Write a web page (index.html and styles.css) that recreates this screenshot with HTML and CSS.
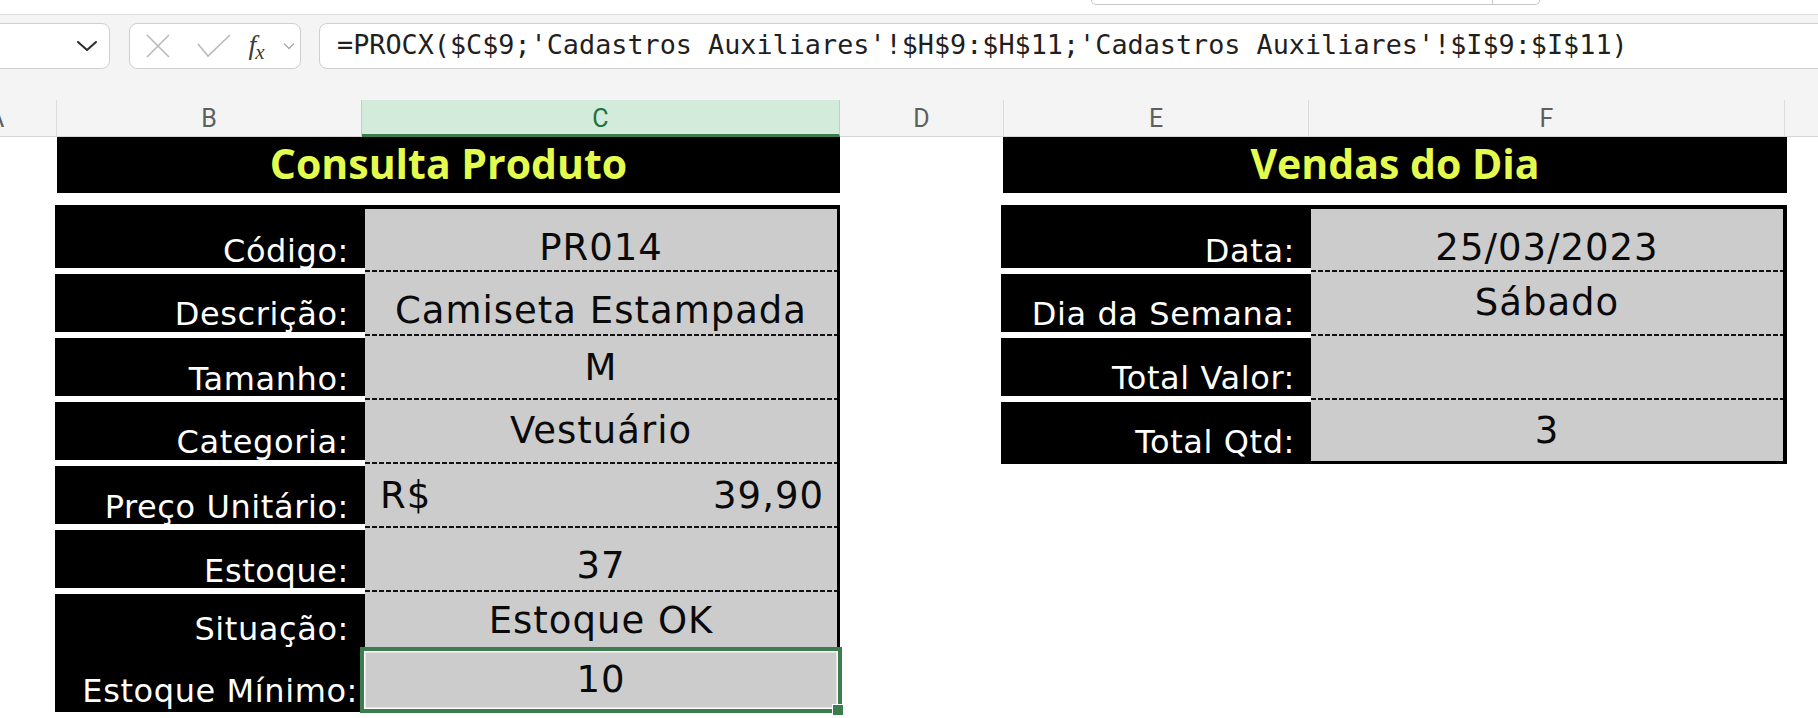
FILE: index.html
```html
<!DOCTYPE html>
<html lang="pt-BR">
<head>
<meta charset="utf-8">
<title>Consulta Produto</title>
<link rel="stylesheet" href="styles.css">
</head>
<body>
<div class="topstrip"><div class="searchbox"><span class="sb-div"></span></div></div>
<div class="toolbar">
  <div class="namebox">
    <svg class="chev" width="20" height="10" viewBox="0 0 20 10"><polyline points="1,1 10,9 19,1" fill="none" stroke="#2b2b2b" stroke-width="2" stroke-linecap="round" stroke-linejoin="round"/></svg>
  </div>
  <div class="fxbox">
    <svg class="ic-x" width="24" height="24" viewBox="0 0 24 24"><path d="M1 1 L23 23 M23 1 L1 23" stroke="#b9b9b9" stroke-width="1.6" fill="none"/></svg>
    <svg class="ic-check" width="34" height="24" viewBox="0 0 34 24"><polyline points="1,10 11,22 33,1" fill="none" stroke="#b9b9b9" stroke-width="1.6"/></svg>
    <span class="fx"><i>f</i><span class="fx-sub">x</span></span>
    <svg class="ic-chev-sm" width="12" height="8" viewBox="0 0 12 8"><polyline points="1,1.5 6,6.5 11,1.5" fill="none" stroke="#a8a8a8" stroke-width="1.3"/></svg>
  </div>
  <div class="formula">=PROCX($C$9;'Cadastros Auxiliares'!$H$9:$H$11;'Cadastros Auxiliares'!$I$9:$I$11)</div>
</div>
<div class="colheads">
  <div class="ch ch-a"><span class="a-clip">A</span></div>
  <div class="ch ch-b">B</div>
  <div class="ch ch-c">C</div>
  <div class="ch ch-d">D</div>
  <div class="ch ch-e">E</div>
  <div class="ch ch-f">F</div>
  <div class="ch ch-g"></div>
</div>
<div class="sheet">
  <section class="block block-left">
    <div class="title">Consulta Produto</div>
    <div class="card">
      <div class="row sep h65"><div class="lab">Código:</div><div class="val pb8">PR014</div></div>
      <div class="row sep"><div class="lab lpb2">Descrição:</div><div class="val pb9">Camiseta Estampada</div></div>
      <div class="row sep"><div class="lab">Tamanho:</div><div class="val pb16">M</div></div>
      <div class="row sep"><div class="lab lpb2">Categoria:</div><div class="val pb17">Vestuário</div></div>
      <div class="row sep"><div class="lab">Preço Unitário:</div><div class="val split pb16"><span>R$</span><span>39,90</span></div></div>
      <div class="row sep"><div class="lab">Estoque:</div><div class="val pb10">37</div></div>
      <div class="row h53"><div class="lab lpb2">Situação:</div><div class="val pb8">Estoque OK</div></div>
      <div class="row h65"><div class="lab lab-wide lpb5">Estoque Mínimo:</div><div class="val selected pb14">10<span class="sel"></span></div></div>
    </div>
  </section>
  <section class="block block-right">
    <div class="title">Vendas do Dia</div>
    <div class="card card-right">
      <div class="row sep h65"><div class="lab">Data:</div><div class="val pb8">25/03/2023</div></div>
      <div class="row sep"><div class="lab lpb2">Dia da Semana:</div><div class="val pb17">Sábado</div></div>
      <div class="row sep"><div class="lab lpb2">Total Valor:</div><div class="val"></div></div>
      <div class="row h59"><div class="lab lpb3">Total Qtd:</div><div class="val pb12">3</div></div>
    </div>
  </section>
</div>
</body>
</html>
```
FILE: styles.css
```css
* { box-sizing: border-box; }

html, body {
  margin: 0;
  padding: 0;
}

body {
  width: 1818px;
  height: 718px;
  overflow: hidden;
  background: #ffffff;
  font-family: "DejaVu Sans", sans-serif;
}

/* ---------- top strip ---------- */
.topstrip {
  height: 14px;
  background: #ffffff;
  padding-left: 1091px;
}

.searchbox {
  width: 449px;
  height: 5px;
  border: 1.5px solid #c8c8c8;
  border-top: none;
  border-radius: 0 0 8px 8px;
  display: flex;
  justify-content: flex-end;
  background: #fff;
}

.sb-div {
  width: 47px;
  border-left: 1.5px solid #c8c8c8;
}

/* ---------- toolbar ---------- */
.toolbar {
  height: 86px;
  background: #f4f4f4;
  border-top: 1px solid #dedede;
  display: flex;
  align-items: flex-start;
  padding-top: 8px;
}

.namebox {
  width: 122px;
  margin-left: -12px;
  height: 46px;
  background: #ffffff;
  border: 1.5px solid #cfcfcf;
  border-radius: 8px;
  display: flex;
  align-items: center;
  justify-content: flex-end;
  padding-right: 12px;
  flex: none;
}

.fxbox {
  margin-left: 19px;
  width: 172px;
  height: 46px;
  background: #ffffff;
  border: 1.5px solid #cfcfcf;
  border-radius: 8px;
  display: flex;
  align-items: center;
  flex: none;
}

.ic-x { margin-left: 15.5px; flex: none; }
.ic-check { margin-left: 27px; flex: none; }

.fx {
  margin-left: 18px;
  width: 24px;
  flex: none;
  font-family: "Liberation Serif", "DejaVu Serif", serif;
  color: #3c3c3c;
  font-size: 28px;
  line-height: 28px;
  white-space: nowrap;
}

.fx i { font-style: italic; }

.fx-sub {
  font-style: italic;
  font-size: 21px;
  position: relative;
  top: 5px;
  margin-left: -1px;
}

.ic-chev-sm { margin-left: 10px; flex: none; }

.formula {
  margin-left: 18px;
  width: 1520px;
  height: 46px;
  flex: none;
  background: #ffffff;
  border: 1.5px solid #cfcfcf;
  border-radius: 8px;
  font-family: "DejaVu Sans Mono", "Liberation Mono", monospace;
  font-size: 26.8px;
  line-height: 42px;
  padding-left: 17px;
  white-space: nowrap;
  color: #1f1f1f;
}

/* ---------- column headers ---------- */
.colheads {
  display: flex;
  height: 37px;
  background: #f4f4f4;
}

.ch {
  flex: none;
  border-right: 1px solid #dcdcdc;
  border-bottom: 1px solid #d6d6d6;
  display: flex;
  align-items: center;
  justify-content: center;
  font-family: Roboto, "Liberation Sans", sans-serif;
  font-size: 25px;
  color: #5f5f5f;
}

.ch-a { width: 57px; overflow: hidden; justify-content: flex-start; }
.a-clip { margin-left: -12px; }
.ch-b { width: 305px; border-right-color: #b4d8bf; }
.ch-c {
  width: 478px;
  background: #d3ebdb;
  color: #22703d;
  border-right-color: #b4d8bf;
  border-bottom: 3px solid #3b7d4f;
  padding-top: 2px;
}
.ch-d { width: 164px; }
.ch-e { width: 305px; }
.ch-f { width: 476px; }
.ch-g { flex: 1; border-right: none; }

/* ---------- sheet ---------- */
.sheet {
  display: flex;
  padding-left: 55px;
  gap: 161px;
}

.block-left { width: 785px; }
.block-right { width: 786px; }

.title {
  margin-left: 2px;
  height: 56px;
  background: #000000;
  color: #e4fc4e;
  font-family: "Open Sans", "Liberation Sans", sans-serif;
  font-weight: 700;
  font-size: 41px;
  line-height: 52px;
  text-align: center;
  margin-bottom: 12px;
}

.card {
  background: #000000;
  padding: 4px 3px 0 0;
}

.card-right { padding-bottom: 3px; }

.row {
  display: grid;
  grid-template-columns: 310px 472px;
  height: 64px;
}

.row.h65 { height: 65px; }
.row.h59 { height: 59px; }
.row.h53 { height: 53px; }

.lab {
  background: #000000;
  color: #ffffff;
  display: flex;
  align-items: flex-end;
  justify-content: flex-end;
  padding: 0 16px 1px 0;
  font-size: 32px;
  line-height: 32px;
  letter-spacing: 0.6px;
  white-space: nowrap;
}

.lab-wide { padding-right: 7px; }
.lpb2 { padding-bottom: 2px; }
.lpb3 { padding-bottom: 3px; }
.lpb5 { padding-bottom: 5px; }

.row.sep .lab { border-bottom: 6px solid #ffffff; }

.val {
  background-color: #cccccc;
  color: #0a0a0a;
  display: flex;
  align-items: flex-end;
  justify-content: center;
  font-size: 37px;
  line-height: 37px;
  letter-spacing: 1px;
  white-space: nowrap;
}

.row.sep .val {
  background-image: repeating-linear-gradient(90deg, #111111 0 5px, transparent 5px 7px);
  background-size: 100% 2px;
  background-position: 0 calc(100% - 2px);
  background-repeat: no-repeat;
}

.val.split {
  justify-content: space-between;
  padding-left: 15px;
  padding-right: 13px;
}

.pb8 { padding-bottom: 8px; }
.pb9 { padding-bottom: 9px; }
.pb10 { padding-bottom: 10px; }
.pb12 { padding-bottom: 12px; }
.pb14 { padding-bottom: 14px; }
.pb16 { padding-bottom: 16px; }
.pb17 { padding-bottom: 17px; }

.val.selected { position: relative; }

.sel {
  position: absolute;
  left: -5px;
  right: -5px;
  top: 0;
  bottom: -1px;
  border: 4px solid #3b7d4f;
  box-shadow: inset 0 0 0 1.5px #ffffff;
  pointer-events: none;
}

.sel::after {
  content: "";
  position: absolute;
  right: -6px;
  bottom: -7px;
  width: 10px;
  height: 10px;
  background: #3b7d4f;
  border: 1px solid #ffffff;
}
```
